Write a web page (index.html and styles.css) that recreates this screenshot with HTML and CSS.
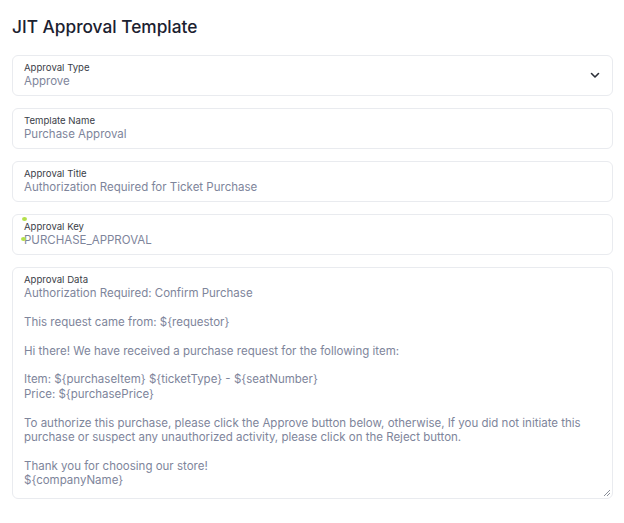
FILE: index.html
```html
<!DOCTYPE html>
<html lang="en">
<head>
<meta charset="utf-8">
<title>JIT Approval Template</title>
<link rel="stylesheet" href="styles.css">
</head>
<body>
<main class="page">
  <h1 class="title">JIT Approval Template</h1>
  <form class="form">
    <div class="field field-select">
      <div class="field-body">
        <label class="field-label">Approval Type</label>
        <div class="field-value">Approve</div>
      </div>
      <svg class="chevron" width="10" height="7" viewBox="0 0 10 7" aria-hidden="true"><path d="M1.5 1.5 L5 5 L8.5 1.5" fill="none" stroke="#2b2f38" stroke-width="1.6" stroke-linecap="round" stroke-linejoin="round"/></svg>
    </div>
    <div class="field">
      <label class="field-label">Template Name</label>
      <div class="field-value">Purchase Approval</div>
    </div>
    <div class="field">
      <label class="field-label">Approval Title</label>
      <div class="field-value">Authorization Required for Ticket Purchase</div>
    </div>
    <div class="field field-key">
      <span class="dot dot-a"></span>
      <span class="dot dot-b"></span>
      <label class="field-label">Approval Key</label>
      <div class="field-value">PURCHASE_APPROVAL</div>
    </div>
    <div class="field field-area">
      <label class="field-label">Approval Data</label>
      <div class="field-value area-text">Authorization Required: Confirm Purchase

This request came from: ${requestor}

Hi there! We have received a purchase request for the following item:

Item: ${purchaseItem} ${ticketType} - ${seatNumber}
Price: ${purchasePrice}

To authorize this purchase, please click the Approve button below, otherwise, If you did not initiate this purchase or suspect any unauthorized activity, please click on the Reject button.

Thank you for choosing our store!
${companyName}</div>
      <svg class="grip" width="8" height="8" viewBox="0 0 8 8" aria-hidden="true"><path d="M7 1 L1 7 M7 4 L4 7" stroke="#8a8f99" stroke-width="1" fill="none"/></svg>
    </div>
  </form>
</main>
</body>
</html>
```
FILE: styles.css
```css
* { box-sizing: border-box; }
html, body { margin: 0; padding: 0; background: #ffffff; }
body {
  font-family: Inter, "Noto Sans", "Liberation Sans", sans-serif;
  color: #1f2430;
}
.page {
  padding: 15px 11px 0 12px;
}
.title {
  margin: 0 0 16px 0;
  font-size: 17.3px;
  line-height: 24px;
  font-weight: 450;
  color: #1b2130;
}
.form {
  display: flex;
  flex-direction: column;
  gap: 12px;
}
.field {
  position: relative;
  border: 1px solid #e9ebef;
  border-radius: 6px;
  padding: 5px 11px 6px 11px;
  display: flex;
  flex-direction: column;
}
.field-select {
  flex-direction: row;
  align-items: center;
  justify-content: space-between;
  padding-right: 12px;
}
.field-body { display: flex; flex-direction: column; }
.field-label {
  font-size: 9.6px;
  line-height: 13px;
  color: #3a3e48;
}
.field-value {
  font-size: 11.5px;
  line-height: 15px;
  color: #7e859b;
}
.area-text {
  white-space: pre-wrap;
  line-height: 14.4px;
  padding-right: 20px;
  padding-bottom: 4px;
}
.chevron { display: block; }
.grip {
  position: absolute;
  right: 1px;
  bottom: 1px;
}
.dot {
  position: absolute;
  width: 5px;
  height: 4px;
  border-radius: 50%;
  background: #b4e04a;
}
.dot-a { left: 9px; top: 2px; }
.dot-b { left: 8px; top: 22px; }
```
